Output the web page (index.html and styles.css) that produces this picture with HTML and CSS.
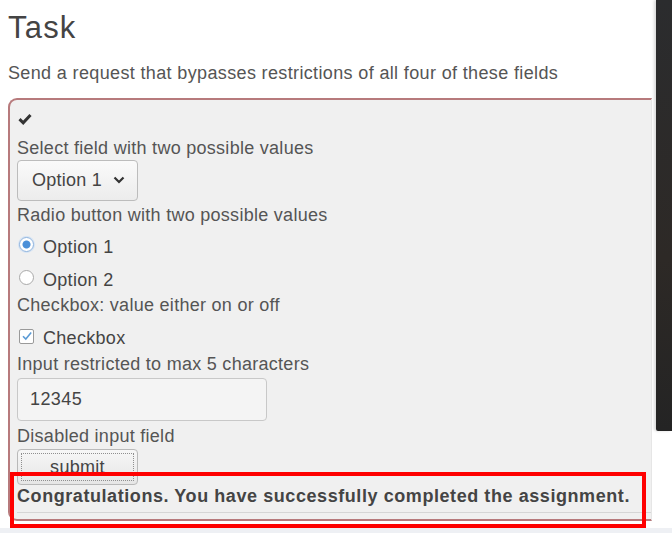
FILE: index.html
```html
<!DOCTYPE html>
<html lang="en">
<head>
<meta charset="utf-8">
<title>Task</title>
<link rel="stylesheet" href="styles.css">
</head>
<body>
<div class="screen">
  <main class="page">
    <h2 class="title">Task</h2>
    <p class="intro">Send a request that bypasses restrictions of all four of these fields</p>
    <div class="attack-box">
      <div class="attack-body">
        <svg class="done-icon" width="14" height="12" viewBox="0 0 14 12" aria-hidden="true">
          <path d="M1.5 6.2 L5.2 9.8 L12.5 2" fill="none" stroke="#333" stroke-width="3" stroke-linecap="butt" stroke-linejoin="miter"/>
        </svg>
        <form class="fields">
          <div class="lbl lbl-first">Select field with two possible values</div>
          <div class="select-box">
            <span>Option 1</span>
            <svg class="chev" width="12" height="8" viewBox="0 0 12 8" aria-hidden="true">
              <path d="M1.5 1.5 L6 6 L10.5 1.5" fill="none" stroke="#333" stroke-width="2.2"/>
            </svg>
          </div>
          <div class="lbl lbl-after-ctrl">Radio button with two possible values</div>
          <label class="choice choice-first"><span class="radio radio-on"></span>Option 1</label>
          <label class="choice"><span class="radio"></span>Option 2</label>
          <div class="lbl lbl-after-choice">Checkbox: value either on or off</div>
          <label class="choice"><span class="check">
            <svg width="12" height="12" viewBox="0 0 12 12" aria-hidden="true"><path d="M2 6.2 L4.8 9 L10.2 2.6" fill="none" stroke="#5b9bd5" stroke-width="1.6"/></svg>
          </span>Checkbox</label>
          <div class="lbl lbl-after-choice2">Input restricted to max 5 characters</div>
          <div class="text-input">12345</div>
          <div class="lbl lbl-after-input">Disabled input field</div>
          <div class="submit-btn"><span class="submit-inner">submit</span></div>
        </form>
        <div class="feedback">Congratulations. You have successfully completed the assignment.</div>
        <div class="rule"></div>
      </div>
    </div>
    <div class="annotation"></div>
  </main>
  <div class="gutter"></div>
  <aside class="side-panel"></aside>
</div>
<div class="footer-strip"></div>
</body>
</html>
```

FILE: styles.css
```css
* { box-sizing: border-box; }
html, body { margin: 0; padding: 0; background: #fff; }
body {
  width: 672px;
  height: 533px;
  overflow: hidden;
  font-family: "Liberation Sans", Arial, sans-serif;
  color: #555;
}
.screen {
  display: grid;
  grid-template-columns: 652px 4px 16px;
  height: 528px;
}
.page {
  position: relative;
  padding-left: 8px;
  overflow: hidden;
}
.title {
  margin: 10px 0 0;
  font-size: 31px;
  line-height: 36px;
  font-weight: normal;
  letter-spacing: 1.2px;
  color: #444;
}
.intro {
  margin: 16px 0 0;
  font-size: 18px;
  line-height: 22px;
  letter-spacing: 0.36px;
  color: #555;
}
.attack-box {
  margin-top: 14px;
  border: 2px solid #b77a7c;
  border-right: 1px solid #e6e6e6;
  border-radius: 9px 0 0 9px;
  background: #f0f0f0;
}
.attack-body {
  padding: 6px 0 6px 7px;
}
.done-icon { display: block; margin-top: 7px; margin-left: 1px; height: 12px; margin-bottom: 5px; }
.fields { display: flex; flex-direction: column; align-items: flex-start; }
.lbl { font-size: 18px; line-height: 22px; height: 22px; letter-spacing: 0.28px; color: #555; white-space: nowrap; }
.lbl-first { margin-top: 7px; }
.lbl-after-ctrl { margin-top: 3px; }
.lbl-after-choice { margin-top: 3px; }
.lbl-after-choice2 { margin-top: 4px; }
.lbl-after-input { margin-top: 4px; }
.select-box {
  margin-top: 1px;
  width: 121px;
  height: 41px;
  border: 1px solid #bcbcbc;
  border-radius: 4px;
  background: linear-gradient(#fafafa, #ececec);
  display: flex;
  align-items: center;
  padding-left: 14px;
  gap: 11px;
  font-size: 18px;
  letter-spacing: 0.25px;
  color: #444;
}
.chev { margin-top: -2px; }
.choice {
  margin-top: 10px;
  height: 22px;
  display: flex;
  align-items: center;
  font-size: 18px;
  letter-spacing: 0.3px;
  color: #444;
  gap: 9px;
  padding-left: 2px;
}
.choice-first { margin-top: 10px; }
.choice + .choice { margin-top: 11px; }
.lbl + .choice:not(.choice-first) { margin-top: 11px; }
.radio {
  width: 15px;
  height: 15px;
  border-radius: 50%;
  border: 1px solid #a9a9a9;
  background: #fff;
  margin-bottom: 6px;
  flex: none;
}
.radio-on {
  border-color: #8db3df;
  background: radial-gradient(circle, #4a8fd8 0 3.5px, #fff 4.5px);
  box-shadow: 0 0 0 1px #d4e3f4;
}
.check {
  width: 15px;
  height: 15px;
  border: 1px solid #9a9a9a;
  border-radius: 2px;
  background: #fff;
  margin-bottom: 4px;
  display: flex;
  align-items: center;
  justify-content: center;
  flex: none;
}
.text-input {
  margin-top: 3px;
  width: 250px;
  height: 43px;
  border: 1px solid #c8c8c8;
  border-radius: 4px;
  background: #f4f4f4;
  padding-left: 12px;
  display: flex;
  align-items: center;
  font-size: 18px;
  letter-spacing: 0.4px;
  color: #444;
}
.submit-btn {
  margin-top: 2px;
  width: 121px;
  height: 36px;
  border: 1px solid #b9b9b9;
  border-radius: 4px;
  background: linear-gradient(#f7f7f7, #e6e6e6);
  padding: 3px;
  display: flex;
}
.submit-inner {
  flex: 1;
  border: 1px dotted #8f8f8f;
  display: flex;
  justify-content: center;
  align-items: center;
  font-size: 18px;
  letter-spacing: 0.3px;
  color: #444;
}
.feedback {
  height: 22px;
  line-height: 22px;
  font-size: 18px;
  font-weight: bold;
  letter-spacing: 0.57px;
  color: #444;
  white-space: nowrap;
}
.rule {
  margin-top: 5px;
  height: 1px;
  background: #d6d6d6;
}
.annotation {
  position: absolute;
  left: 10px;
  top: 472px;
  width: 636px;
  height: 56px;
  border: 4px solid #ff0000;
}
.side-panel {
  height: 431px;
  background: linear-gradient(#2b2c2e, #2d2926 60%, #242424);
  box-shadow: -2px 0 3px rgba(0,0,0,0.15);
  border-bottom-left-radius: 2px;
}
.footer-strip {
  height: 5px;
  background: #eef0f4;
}
```
